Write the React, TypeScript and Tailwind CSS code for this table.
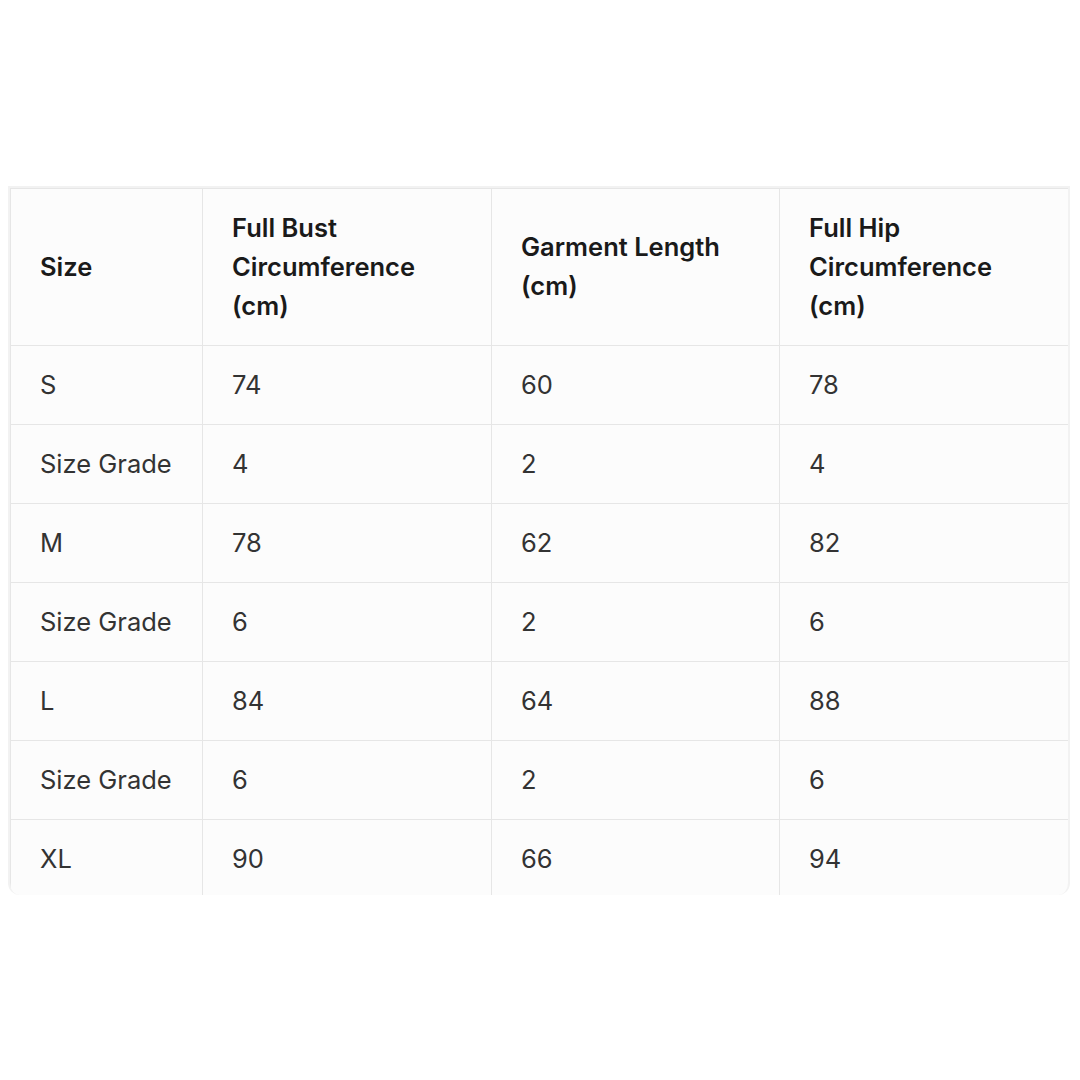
const headers = ["Size", "Full Bust Circumference (cm)", "Garment Length (cm)", "Full Hip Circumference (cm)"];

const rows = [
  ["S", "74", "60", "78"],
  ["Size Grade", "4", "2", "4"],
  ["M", "78", "62", "82"],
  ["Size Grade", "6", "2", "6"],
  ["L", "84", "64", "88"],
  ["Size Grade", "6", "2", "6"],
  ["XL", "90", "66", "94"],
];

export default function App() {
  return (
    <div className="min-h-[1080px] w-[1080px] bg-white pt-[186px] pl-[8px] font-['Inter',_'Noto_Sans',_sans-serif]">
      <div className="w-[1062px] h-[709px] overflow-hidden rounded-b-[12px] border-2 border-b-0 border-[#f2f2f2] bg-[#fcfcfc]">
        <table className="w-[1059px] table-fixed border-collapse text-[25.5px]">
          <colgroup>
            <col className="w-[192px]" />
            <col className="w-[289px]" />
            <col className="w-[288px]" />
            <col className="w-[289px]" />
          </colgroup>
          <thead>
            <tr className="h-[157px]">
              {headers.map((h) => (
                <th
                  key={h}
                  className="border border-[#e6e6e6] pl-[29px] pr-[50px] pb-[2px] text-left align-middle font-semibold leading-[39px] text-[#1a1a1a]"
                >
                  {h}
                </th>
              ))}
            </tr>
          </thead>
          <tbody>
            {rows.map((r, i) => (
              <tr key={i} className="h-[79px]">
                {r.map((c, j) => (
                  <td
                    key={j}
                    className="border border-[#e6e6e6] pl-[29px] pb-[2px] align-middle leading-[39px] text-[#333333]"
                  >
                    {c}
                  </td>
                ))}
              </tr>
            ))}
          </tbody>
        </table>
      </div>
    </div>
  );
}
